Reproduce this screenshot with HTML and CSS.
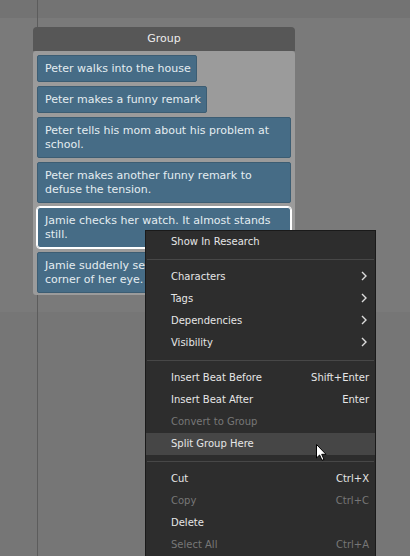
FILE: index.html
```html
<!DOCTYPE html>
<html>
<head>
<meta charset="utf-8">
<link rel="stylesheet" href="styles.css">
</head>
<body>
<div class="canvas">
  <div class="band band-top"></div>
  <div class="band band-mid"></div>
  <div class="band band-bottom"></div>
  <div class="guide"></div>

  <div class="group">
    <div class="group-header">Group</div>
    <div class="group-body">
      <div class="beat fit">Peter walks into the house</div>
      <div class="beat fit">Peter makes a funny remark</div>
      <div class="beat">Peter tells his mom about his problem at school.</div>
      <div class="beat">Peter makes another funny remark to defuse the tension.</div>
      <div class="beat selected">Jamie checks her watch. It almost stands still.</div>
      <div class="beat">Jamie suddenly sees something out of the corner of her eye.</div>
    </div>
  </div>

  <div class="menu">
    <div class="item"><span>Show In Research</span></div>
    <div class="sep"></div>
    <div class="item"><span>Characters</span><svg class="chev" viewBox="0 0 6 10" width="6" height="10"><path d="M1 1 L5 5 L1 9" fill="none" stroke="#dcdcdc" stroke-width="1.4"/></svg></div>
    <div class="item"><span>Tags</span><svg class="chev" viewBox="0 0 6 10" width="6" height="10"><path d="M1 1 L5 5 L1 9" fill="none" stroke="#dcdcdc" stroke-width="1.4"/></svg></div>
    <div class="item"><span>Dependencies</span><svg class="chev" viewBox="0 0 6 10" width="6" height="10"><path d="M1 1 L5 5 L1 9" fill="none" stroke="#dcdcdc" stroke-width="1.4"/></svg></div>
    <div class="item"><span>Visibility</span><svg class="chev" viewBox="0 0 6 10" width="6" height="10"><path d="M1 1 L5 5 L1 9" fill="none" stroke="#dcdcdc" stroke-width="1.4"/></svg></div>
    <div class="sep"></div>
    <div class="item"><span>Insert Beat Before</span><span class="key">Shift+Enter</span></div>
    <div class="item"><span>Insert Beat After</span><span class="key">Enter</span></div>
    <div class="item disabled"><span>Convert to Group</span></div>
    <div class="item hover"><span>Split Group Here</span></div>
    <div class="sep"></div>
    <div class="item"><span>Cut</span><span class="key">Ctrl+X</span></div>
    <div class="item disabled"><span>Copy</span><span class="key">Ctrl+C</span></div>
    <div class="item"><span>Delete</span></div>
    <div class="item disabled"><span>Select All</span><span class="key">Ctrl+A</span></div>
  </div>

  <svg class="cursor" width="12" height="18" viewBox="0 0 12 18">
    <path d="M0.5 0.5 L0.5 14 L3.6 11 L6 16.3 L8 15.4 L5.7 10.3 L10 10.3 Z" fill="#ffffff" stroke="#000000" stroke-width="1" stroke-linejoin="miter"/>
  </svg>
</div>
</body>
</html>
```
FILE: styles.css
```css
html, body {
  margin: 0;
  padding: 0;
  overflow: hidden;
}
body {
  width: 410px;
  height: 556px;
  font-family: "DejaVu Sans", Verdana, sans-serif;
}
.canvas {
  position: relative;
  width: 410px;
  height: 556px;
  display: flex;
  flex-direction: column;
  overflow: hidden;
}
.band-top {
  height: 18px;
  background: #737373;
}
.band-mid {
  height: 294px;
  background: #7a7a7a;
}
.band-bottom {
  flex: 1;
  background: #767676;
}
.guide {
  position: absolute;
  left: 37px;
  top: 0;
  bottom: 0;
  width: 1px;
  background: #5c5c5c;
}

.group {
  position: absolute;
  left: 33px;
  top: 27px;
  width: 262px;
  display: flex;
  flex-direction: column;
}
.group-header {
  height: 24px;
  background: #575757;
  border-radius: 4px 4px 0 0;
  color: #ececec;
  font-size: 11px;
  line-height: 24px;
  text-align: center;
}
.group-body {
  background: #9b9b9b;
  padding: 4px 4px 2px 4px;
  display: flex;
  flex-direction: column;
  gap: 4px;
  border-radius: 3px;
}
.beat {
  background: #466c86;
  border: 1px solid #3c5d73;
  border-radius: 2px;
  color: #e4ecf1;
  font-size: 11px;
  line-height: 14px;
  padding: 6px 8px 5px 7px;
}
.beat.fit {
  align-self: flex-start;
  padding-right: 5px;
}
.beat.selected {
  border-color: #ffffff;
  outline: 1px solid #ffffff;
  border-radius: 3px;
}

.menu {
  position: absolute;
  left: 145px;
  top: 230px;
  width: 229px;
  background: #2d2d2d;
  border: 1px solid #1a1a1a;
  color: #e6e6e6;
  font-size: 10px;
  padding-bottom: 4px;
}
.item {
  height: 22px;
  box-sizing: border-box;
  display: flex;
  align-items: center;
  justify-content: space-between;
  padding: 0 6px 2px 25px;
}
.item.disabled {
  color: #777777;
}
.item.hover {
  background: #464646;
}
.chev {
  margin-right: 2px;
}
.sep {
  height: 1px;
  background: #474747;
  margin: 6px 1px;
}
.cursor {
  position: absolute;
  left: 316px;
  top: 444px;
}
```
